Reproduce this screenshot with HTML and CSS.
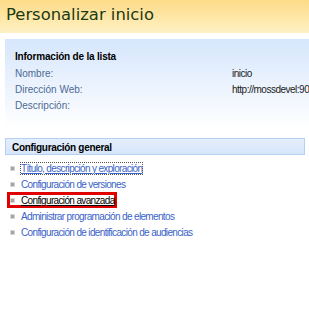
FILE: index.html
```html
<!DOCTYPE html>
<html lang="es">
<head>
    <meta charset="UTF-8">
    <title>Personalizar inicio</title>
    <link rel="stylesheet" href="styles.css">
</head>
<body>
    <div class="titulo">Personalizar inicio</div>

    <div class="info">
        <h3>Información de la lista</h3>
        <div class="fila"><span class="etiqueta">Nombre:</span><span class="valor">inicio</span></div>
        <div class="fila"><span class="etiqueta">Dirección Web:</span><span class="valor">http://mossdevel:9000/inicio</span></div>
        <div class="fila"><span class="etiqueta">Descripción:</span><span class="valor"></span></div>
    </div>

    <div class="seccion">Configuración general</div>
    <ul class="enlaces">
        <li><a href="#" class="foco">Título, descripción y exploración</a></li>
        <li><a href="#">Configuración de versiones</a></li>
        <li class="marcado"><a href="#">Configuración avanzada</a></li>
        <li><a href="#">Administrar programación de elementos</a></li>
        <li><a href="#">Configuración de identificación de audiencias</a></li>
    </ul>
</body>
</html>
```

FILE: styles.css
```css
body {
    margin: 0;
    font-family: "Liberation Sans", Arial, sans-serif;
    font-size: 10px;
    letter-spacing: -0.65px;
    background-color: #fff;
    overflow: hidden;
}
.titulo {
    height: 33px;
    box-sizing: border-box;
    padding: 5px 0 0 6px;
    font-family: "DejaVu Sans", Verdana, sans-serif;
    font-size: 16.4px;
    letter-spacing: 0;
    color: #1c3a12;
    background: linear-gradient(#fddb87, #fff1c4);
}
.info {
    margin: 6px 0 0 5px;
    padding: 12px 0 12px 10px;
    background: linear-gradient(#d6e6fc, #ffffff);
}
.info h3 {
    margin: 0 0 6px 0;
    font-size: 10px;
    font-weight: bold;
    letter-spacing: -0.2px;
    color: #000;
}
.fila {
    display: flex;
    height: 16px;
    white-space: nowrap;
    overflow: hidden;
    letter-spacing: 0;
}
.etiqueta {
    flex-shrink: 0;
    width: 217px;
    color: #4d6a94;
}
.valor {
    flex-shrink: 0;
    letter-spacing: -0.5px;
    color: #222;
}
.seccion {
    margin: 10px 4px 0 5px;
    height: 17px;
    box-sizing: border-box;
    padding: 3px 0 0 6px;
    border: 1px solid #b4d1f3;
    background: linear-gradient(#e4eefc, #d7e6fb);
    font-weight: bold;
    letter-spacing: -0.3px;
    color: #000;
}
.enlaces {
    list-style: none;
    margin: 5px 0 0 0;
    padding: 0 0 0 10px;
}
.enlaces li {
    display: flex;
    align-items: center;
    height: 16px;
    white-space: nowrap;
}
.enlaces li::before {
    content: "";
    width: 3px;
    height: 3px;
    margin-right: 6px;
    background-color: #a3a3a3;
    border: 1px solid #d8d8d8;
}
.enlaces a {
    color: #3a63c7;
    text-decoration: none;
}
.enlaces a.foco {
    outline: 1px dotted #555;
    text-decoration: underline;
}
.enlaces li.marcado {
    margin-left: -3px;
    padding-left: 3px;
    width: 107px;
    box-shadow: 0 0 0 3px #e00000 inset;
}
.enlaces li.marcado a {
    color: #000;
    text-decoration: underline;
}
```
